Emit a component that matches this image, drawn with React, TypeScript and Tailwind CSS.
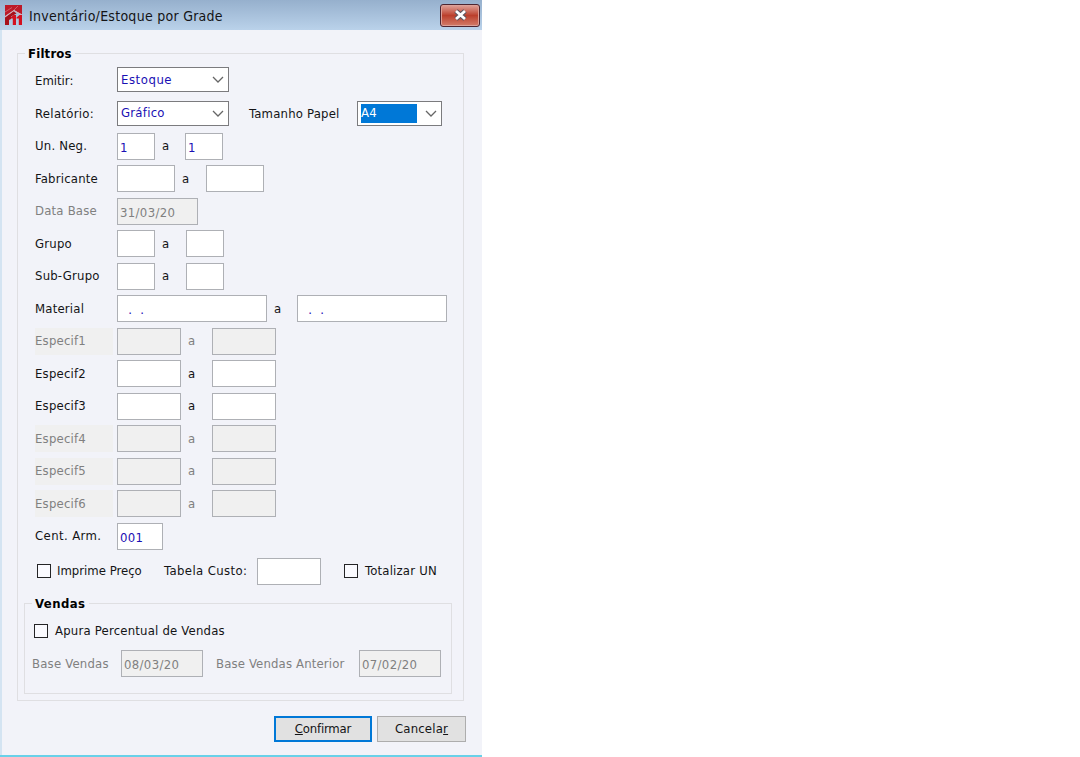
import React from "react";

type BoxProps = { className: string; disabled?: boolean; children?: React.ReactNode };

function Field({ className, disabled, children }: BoxProps) {
  return (
    <div
      className={`flex h-[27px] shrink-0 items-center whitespace-pre border border-[#aeb0b5] pl-[2px] pt-[3px] tracking-[0.35px] ${
        disabled ? "bg-[#f0f0f0] text-[#808080]" : "bg-white text-[#1a10b4]"
      } ${className}`}
    >
      {children}
    </div>
  );
}

function Chevron() {
  return (
    <svg className="ml-auto mr-[4px] h-[7px] w-[12px]" viewBox="0 0 12 7" fill="none" stroke="#666" strokeWidth="1.3">
      <path d="M1 1 L6 6 L11 1" />
    </svg>
  );
}

function Combo({ className, children }: BoxProps) {
  return (
    <div className={`flex h-[25px] shrink-0 items-center border border-[#7b7b7e] bg-white pl-[3px] text-[#1a10b4] ${className}`}>
      {children}
      <Chevron />
    </div>
  );
}

type RangeProps = { label: string; width: string; gap: string; disabled?: boolean; value?: string };

function Range({ label, width, gap, disabled, value }: RangeProps) {
  return (
    <div className={`flex h-[32.5px] items-center ${disabled ? "text-[#808080]" : ""}`}>
      <div className={`mr-[4px] flex h-[27px] w-[78px] shrink-0 items-center ${disabled ? "bg-[#f0f0f0]" : ""}`}>
        <span>{label}</span>
      </div>
      <Field className={width} disabled={disabled}>{value}</Field>
      <span className={`shrink-0 pl-[7px] ${gap}`}>a</span>
      <Field className={width} disabled={disabled}>{value}</Field>
    </div>
  );
}

function Check() {
  return <span className="h-[14px] w-[14px] shrink-0 border-[1.5px] border-[#242426] bg-[#fafaff]" />;
}

function AppIcon() {
  return (
    <svg className="h-[21px] w-[18px] shrink-0" viewBox="0 0 18 21">
      <path d="M0 0h17v9.5L9 5 0 11z" fill="#bd1a28" />
      <path d="M0 12.5 8.5 6l3 2.5L6 11.5v2.5l-2 1v5H0z" fill="#a8111c" />
      <path d="M0 7 7 2.5 M9 5 13 1" stroke="#d07078" strokeWidth=".8" fill="none" />
      <path d="M0 11.8 9 5.6l8 4.4" stroke="#e0aab4" strokeWidth="1" fill="none" />
      <path d="M5.5 12.4 8.5 10H11v10H7.8v-6.6H5.5zm6 0 3-2.4H17v10h-3.2v-6.6h-2.3z" fill="#d3101f" />
    </svg>
  );
}

export default function App() {
  return (
    <div className="flex h-[757px] w-[1080px] bg-white font-['DejaVu_Sans_Condensed','DejaVu_Sans',sans-serif] text-[13px] leading-[18px] tracking-[0.2px] text-[#141416] [font-stretch:condensed]">
      <main className="flex w-[482px] flex-col border-b-2 border-[#69d1e9] bg-[#f2f3f9]">
        <header className="flex h-[30px] shrink-0 items-center justify-between bg-linear-to-b from-[#96b0cd] to-[#bad2ea] pl-[5px] pr-[2px]">
          <div className="flex items-center gap-[6px]">
            <AppIcon />
            <h1 className="mt-[2px] whitespace-nowrap text-[14px] tracking-[0.27px]">Inventário/Estoque por Grade</h1>
          </div>
          <button aria-label="Fechar" className="flex h-[23px] w-[40px] items-center justify-center rounded-[3px] border border-[#4d2631] bg-linear-to-b from-[#dfa39b] from-0% via-[#bb3f2c] via-50% to-[#d27c69] shadow-[inset_0_0_0_1px_#dca198]">
            <svg className="h-[12px] w-[15px]" viewBox="0 0 15 12">
              <path d="m3 2 9 8M12 2l-9 8" stroke="#59555f" strokeWidth="5" />
              <path d="m3 2 9 8M12 2l-9 8" stroke="#fff" strokeWidth="2.8" />
            </svg>
          </button>
        </header>
        <div className="flex flex-1 flex-col border-l-2 border-l-[#d4e4f2] pl-[15px] pt-[15px]">
          <fieldset className="h-[656px] w-[447px] shrink-0 border border-[#dfdfe2] pl-[17px]">
            <legend className="-ml-[10px] h-[17px] px-[3px] font-bold leading-[17px] text-black">Filtros</legend>
            <div className="flex h-[35px] items-center">
              <span className="w-[82px] shrink-0 pt-[2px] tracking-[0px]">Emitir:</span>
              <Combo className="w-[112px]"><span className="tracking-[0.55px]">Estoque</span></Combo>
            </div>
            <div className="flex h-[32px] items-center">
              <span className="w-[82px] shrink-0 pt-[2px] tracking-[0.3px]">Relatório:</span>
              <Combo className="w-[112px]"><span className="tracking-[0.25px]">Gráfico</span></Combo>
              <span className="ml-[20px] w-[108px] shrink-0 pt-[2px]">Tamanho Papel</span>
              <Combo className="w-[85px]"><span className="h-[19px] w-[56px] bg-[#0078d7] text-white">A4</span></Combo>
            </div>
            <div className="pt-[1px]">
              <Range label="Un. Neg." width="w-[38px]" gap="w-[30px]" value="1" />
              <Range label="Fabricante" width="w-[58px]" gap="w-[31px]" />
              <div className="flex h-[32.5px] items-center text-[#808080]">
                <span className="w-[82px] shrink-0">Data Base</span>
                <Field className="w-[81px]" disabled>31/03/20</Field>
              </div>
              <Range label="Grupo" width="w-[38px]" gap="w-[31px]" />
              <Range label="Sub-Grupo" width="w-[38px]" gap="w-[31px]" />
              <Range label="Material" width="w-[150px]" gap="w-[30px]" value="  .  ." />
              <Range label="Especif1" width="w-[64px]" gap="w-[31px]" disabled />
              <Range label="Especif2" width="w-[64px]" gap="w-[31px]" />
              <Range label="Especif3" width="w-[64px]" gap="w-[31px]" />
              <Range label="Especif4" width="w-[64px]" gap="w-[31px]" disabled />
              <Range label="Especif5" width="w-[64px]" gap="w-[31px]" disabled />
              <Range label="Especif6" width="w-[64px]" gap="w-[31px]" disabled />
              <div className="flex h-[32.5px] items-center">
                <span className="w-[82px] shrink-0 tracking-[0.4px]">Cent. Arm.</span>
                <Field className="w-[46px]">001</Field>
              </div>
            </div>
            <div className="flex h-[37.5px] items-center pl-[2px]">
              <Check />
              <span className="ml-[6px] w-[107px] shrink-0 tracking-[0px]">Imprime Preço</span>
              <span className="w-[93px] shrink-0 tracking-[0.4px]">Tabela Custo:</span>
              <Field className="w-[64px]" />
              <span className="ml-[23px] flex"><Check /></span>
              <span className="ml-[7px] whitespace-nowrap">Totalizar UN</span>
            </div>
            <fieldset className="-ml-[11px] mt-[5px] h-[99px] w-[428px] border border-[#dfdfe2] pl-[7px]">
              <legend className="px-[3px] font-bold leading-[17px] tracking-[0.45px] text-black">Vendas</legend>
              <div className="flex h-[37px] items-center pl-[2px]">
                <Check />
                <span className="ml-[7px]">Apura Percentual de Vendas</span>
              </div>
              <div className="flex h-[28px] items-center whitespace-nowrap text-[#808080]">
                <span className="w-[89px] shrink-0 pt-px">Base Vendas</span>
                <Field className="w-[82px]" disabled>08/03/20</Field>
                <span className="ml-[13px] w-[143px] shrink-0 pt-px tracking-[0.15px]">Base Vendas Anterior</span>
                <Field className="w-[82px]" disabled>07/02/20</Field>
              </div>
            </fieldset>
          </fieldset>
          <div className="ml-[257px] mt-[15px] flex gap-[5px]">
            <button className="h-[26px] w-[98px] border-2 border-[#0078d7] bg-[#e1e1e1] tracking-[-0.2px]"><span className="underline">C</span>onfirmar</button>
            <button className="h-[26px] w-[89px] border border-[#adadad] bg-[#e1e1e1]">Cancela<span className="underline">r</span></button>
          </div>
        </div>
      </main>
    </div>
  );
}
